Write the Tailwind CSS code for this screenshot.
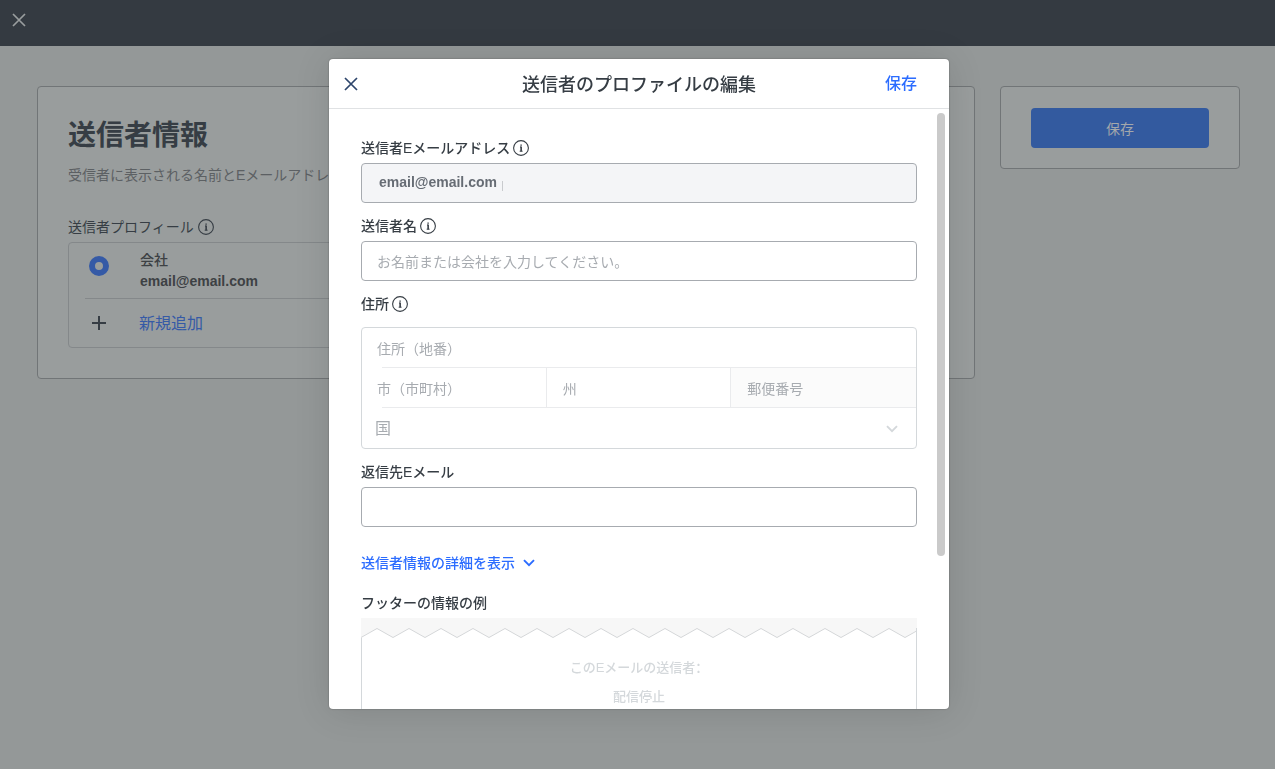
<!DOCTYPE html>
<html lang="ja">
<head>
<meta charset="utf-8">
<meta name="viewport" content="width=device-width, initial-scale=1">
<title>送信者のプロファイルの編集</title>
<script src="https://cdn.jsdelivr.net/npm/@tailwindcss/browser@4"></script>
</head>
<body class="min-h-screen bg-[#949898] font-['Liberation_Sans','Noto_Sans_CJK_JP',sans-serif] text-sm text-[#363d44]">
<svg class="hidden" aria-hidden="true">
  <symbol id="info" viewBox="0 0 16 16">
    <circle cx="8" cy="8" r="7.4" fill="none" stroke="currentColor" stroke-width="1.1"/>
    <path d="M7 7h1.2v4.2M6.7 11.2h2.9" fill="none" stroke="currentColor" stroke-width="1"/>
    <path d="M7.4 4.4h1.4v1.4H7.4zM7.5 6.6h1.3v4.6H7.5z" fill="currentColor"/>
  </symbol>
  <symbol id="cross" viewBox="0 0 14 14">
    <path d="M1 1l12 12M13 1L1 13" fill="none" stroke="currentColor" stroke-width="1.7"/>
  </symbol>
  <symbol id="chevron" viewBox="0 0 12 8">
    <path d="M1 1.2l5 5 5-5" fill="none" stroke="currentColor" stroke-width="1.9"/>
  </symbol>
</svg>

<header class="flex h-[46px] items-center bg-[#343a41] pb-1.5 pl-3">
  <button type="button" aria-label="閉じる" class="text-[#999d9e]"><svg class="size-3.5"><use href="#cross"/></svg></button>
</header>

<main class="flex items-start gap-[25px] pt-10 pr-[35px] pl-[37px]">
  <section class="min-w-0 flex-1 rounded-sm border border-[#717577] bg-[#999d9d] px-[30px] pt-[29px] pb-[30px]">
    <h1 class="text-[28px] leading-10 font-bold">送信者情報</h1>
    <p class="mt-[9px] leading-5 text-[#5c6063]">受信者に表示される名前とEメールアドレス</p>
    <div class="mt-8 flex h-5 items-center gap-1"><h2>送信者プロフィール</h2><svg class="size-4"><use href="#info"/></svg></div>
    <div class="mt-[5px] rounded-sm border border-[#84888a]">
      <label class="flex items-start gap-[31px] pt-[7px] pb-1.5 pl-5 leading-[21px]">
        <input type="radio" name="profile" checked class="mt-1.5 size-5 shrink-0 appearance-none rounded-full border-[6px] border-[#355aa6] bg-[#999d9d]">
        <span class="font-medium text-[#3d4144]">会社<br><b>email@email.com</b></span>
      </label>
      <hr class="ml-4 border-[#84888a]">
      <button type="button" class="flex h-12 w-full items-center gap-[33px] pl-[23px] text-base text-[#355aa6]">
        <svg class="size-3.5 text-[#363d44]" viewBox="0 0 14 14"><path d="M7 0v14M0 7h14" stroke="currentColor" stroke-width="2"/></svg>
        <span class="pt-0.5">新規追加</span>
      </button>
    </div>
  </section>
  <aside class="w-60 rounded-sm border border-[#717577] bg-[#999d9d] px-[30px] pt-[21px] pb-5">
    <button type="button" class="h-10 w-full rounded-sm bg-[#335a9f] pt-0.5 text-[#a4a8ab]">保存</button>
  </aside>
</main>

<div class="fixed inset-0 flex items-start justify-center pt-[59px] pb-[60px] pl-[3px]">
  <div role="dialog" aria-labelledby="dialog-title" class="relative flex max-h-full w-[620px] flex-col overflow-hidden rounded bg-white shadow-[0_0_2px_rgba(0,0,0,0.35),0_2px_36px_rgba(0,0,0,0.12)]">
    <div class="grid h-[50px] shrink-0 grid-cols-[1fr_auto_1fr] items-center border-b border-[#e0e2e4] px-[15px]">
      <button type="button" aria-label="閉じる" class="justify-self-start text-[#2d456b]"><svg class="size-3.5"><use href="#cross"/></svg></button>
      <h2 id="dialog-title" class="pt-0.5 text-lg leading-7 font-medium">送信者のプロファイルの編集</h2>
      <button type="button" class="justify-self-end pr-[17px] text-base font-medium text-[#2b6cff]">保存</button>
    </div>
    <form class="min-h-0 flex-1 overflow-hidden px-8 pt-[29px]">
      <label for="email" class="flex h-5 items-center gap-[3px] font-medium">送信者Eメールアドレス<svg class="size-4"><use href="#info"/></svg></label>
      <div class="relative mt-[5px]">
        <input id="email" type="email" value="email@email.com" readonly class="h-10 w-full rounded-sm border border-[#a7abb0] bg-[#f4f5f7] px-[17px] pb-0.5 font-bold text-[#666c74]">
        <span class="absolute top-[18px] left-[141px] h-2.5 w-px bg-[#c9cbce]"></span>
      </div>
      <label for="name" class="mt-[13px] flex h-5 items-center gap-[3px] font-medium">送信者名<svg class="size-4"><use href="#info"/></svg></label>
      <input id="name" type="text" placeholder="お名前または会社を入力してください。" class="mt-[5px] h-10 w-full rounded-sm border border-[#a7abb0] px-[15px] pt-px placeholder:text-[#a7abb0]">
      <div role="group" aria-labelledby="address-label">
        <div id="address-label" class="mt-[13px] flex h-5 items-center gap-[3px] font-medium">住所<svg class="size-4"><use href="#info"/></svg></div>
        <div class="mt-[13px] overflow-hidden rounded-sm border border-[#d4d8db]">
          <input type="text" aria-label="住所" placeholder="住所（地番）" class="block h-[39px] w-full px-[15px] pt-0.5 placeholder:text-[#a7abb0]">
          <hr class="ml-5 border-[#eaebed]">
          <div class="grid h-[39px] grid-cols-3">
            <input type="text" aria-label="市" placeholder="市（市町村）" class="min-w-0 border-r border-[#eaebed] px-[15px] pt-0.5 placeholder:text-[#a7abb0]">
            <input type="text" aria-label="州" placeholder="州" class="min-w-0 border-r border-[#eaebed] px-4 pt-0.5 placeholder:text-[#a7abb0]">
            <input type="text" aria-label="郵便番号" placeholder="郵便番号" class="min-w-0 bg-[#fbfbfb] px-4 pt-0.5 placeholder:text-[#a7abb0]">
          </div>
          <hr class="ml-5 border-[#eaebed]">
          <div class="relative">
            <select aria-label="国" class="block h-10 w-full appearance-none pt-0.5 pl-[13px] text-base text-[#a7abb0]"><option>国</option></select>
            <svg class="pointer-events-none absolute top-[17px] right-[18px] h-2 w-3 text-[#d4d8db]"><use href="#chevron"/></svg>
          </div>
        </div>
      </div>
      <label for="reply" class="mt-[13px] flex h-5 items-center font-medium">返信先Eメール</label>
      <input id="reply" type="email" class="mt-[5px] h-10 w-full rounded-sm border border-[#a7abb0] px-[15px]">
      <button type="button" class="mt-[26px] flex h-5 items-center gap-2 font-medium text-[#2b6cff]">送信者情報の詳細を表示<svg class="h-2 w-3"><use href="#chevron"/></svg></button>
      <h3 class="mt-5 h-5 leading-5 font-medium">フッターの情報の例</h3>
      <div class="mt-[5px] bg-[#f7f7f7] pt-2.5">
        <svg class="block h-2.5 w-full border-r border-[#d4d8db]" aria-hidden="true">
          <defs><pattern id="tear" width="32" height="10" patternUnits="userSpaceOnUse">
            <path d="M0 9.5L16 .5l16 9V10H0z" fill="#fff"/>
            <path d="M0 9.5L16 .5l16 9" fill="none" stroke="#d4d6d8"/>
          </pattern></defs>
          <rect width="100%" height="10" fill="url(#tear)"/>
        </svg>
        <div class="border-x border-[#d4d8db] bg-white pt-3.5 pb-8 text-center text-[13px] leading-[29px] font-medium text-[#d4d8db]">
          <p>このEメールの送信者<span lang="zh-CN" class="font-['Noto_Sans_CJK_SC']">：</span></p>
          <p>配信停止</p>
        </div>
      </div>
    </form>
    <div class="absolute top-[54px] right-1 h-[443px] w-2 rounded-full bg-[#cacaca]"></div>
  </div>
</div>
</body>
</html>
